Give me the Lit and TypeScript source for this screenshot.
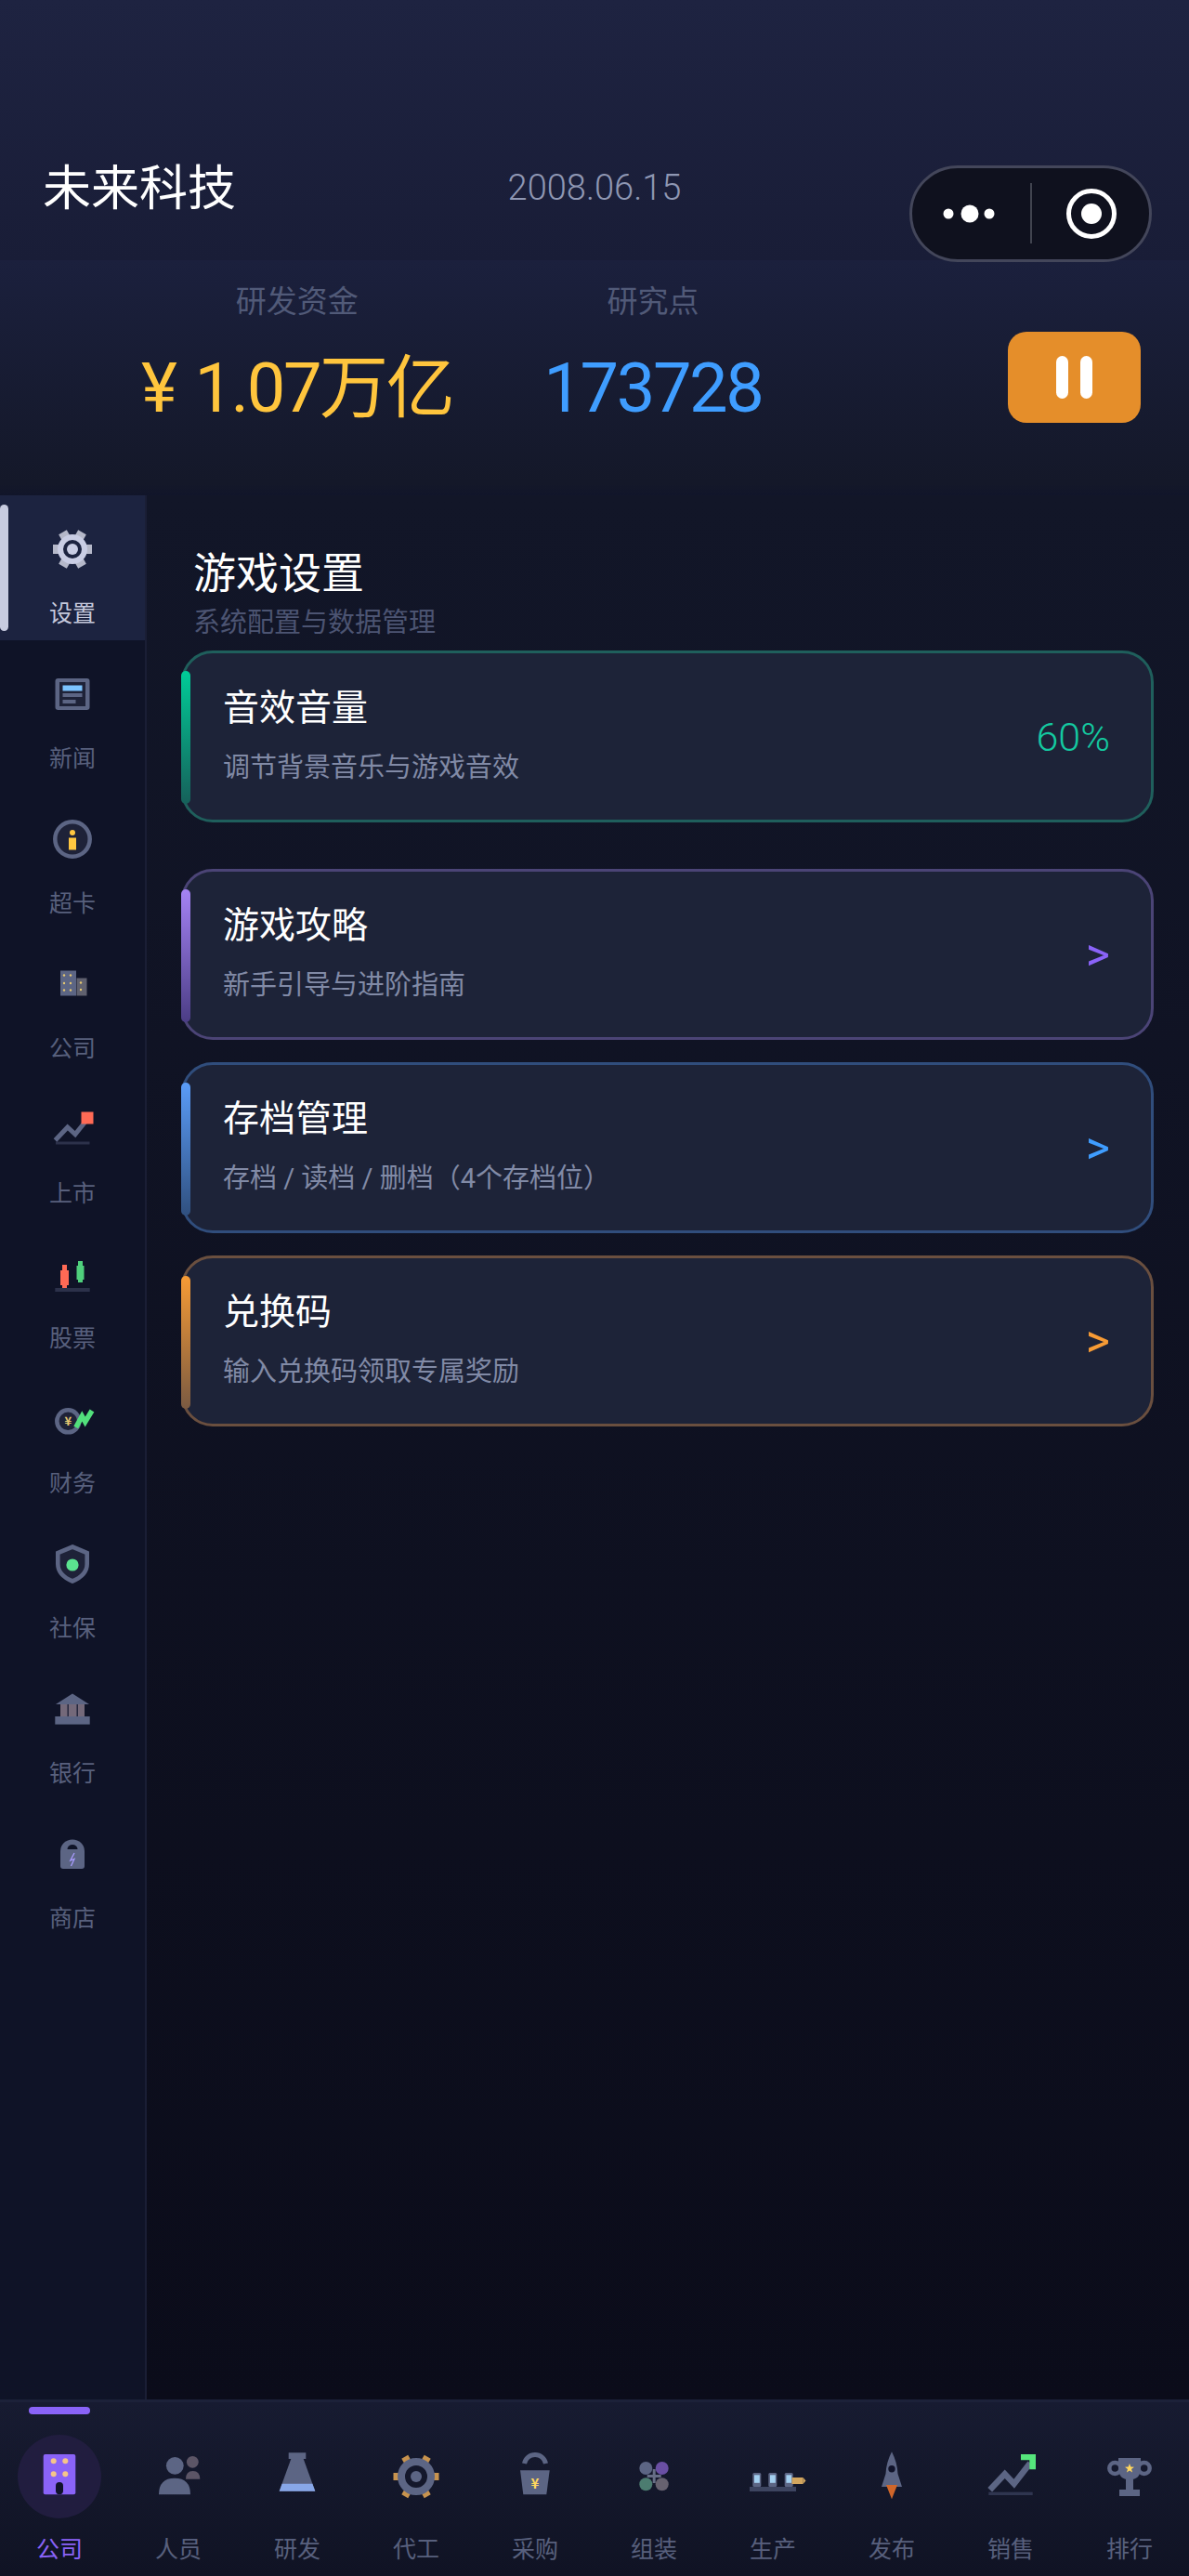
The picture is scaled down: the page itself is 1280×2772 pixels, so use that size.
import { LitElement, css, html, svg } from "lit"
import { customElement } from "lit/decorators.js"

const G = "#5c6584" // grey-blue used by most icons
const D = "#1e2238" // dark icon fill

const side = {
  gear: html`<svg viewBox="0 0 48 48"><g fill="#b5b8c9">${[0, 60, 120, 180, 240, 300].map(a => svg`<rect x="38" y="19" width="7" height="10" transform="rotate(${a} 24 24)"></rect>`)}</g><circle cx="24" cy="24" r="13" fill="none" stroke="#c9cde4" stroke-width="6"></circle><circle cx="24" cy="24" r="6" fill="#c9cde4"></circle></svg>`,
  news: html`<svg viewBox="0 0 48 48"><rect x="5.5" y="7" width="37" height="34" rx="3" fill="${G}"></rect><rect x="10" y="11" width="28" height="26" fill="${D}"></rect><rect x="13.5" y="14.5" width="21" height="6" fill="#7cc4ff"></rect><rect x="13.5" y="23" width="21" height="4" fill="${G}"></rect><rect x="13.5" y="30" width="14" height="4" fill="${G}"></rect></svg>`,
  card: html`<svg viewBox="0 0 48 48"><circle cx="24" cy="24" r="18.7" fill="${D}" stroke="${G}" stroke-width="4.5"></circle><circle cx="24" cy="17" r="3" fill="#ffc740"></circle><rect x="20" y="22.5" width="8" height="13" fill="#ffc740"></rect></svg>`,
  company: html`<svg viewBox="0 0 48 48"><rect x="11" y="9.5" width="17" height="27" fill="${G}"></rect><rect x="28.5" y="17.5" width="11" height="19" fill="#60616f"></rect><g fill="#e6c870">${[15, 22].map(x => [14.5, 23, 30.5].map(y => svg`<circle cx="${x}" cy="${y}" r="1.2"></circle>`))}<circle cx="33" cy="22.5" r="1.2"></circle><circle cx="33" cy="30" r="1.2"></circle></g></svg>`,
  listed: html`<svg viewBox="0 0 48 48"><rect x="6" y="37.5" width="36.5" height="3" fill="#2c314a"></rect><polyline points="5.5,36 18.7,22 27,29.5 39.5,14" fill="none" stroke="${G}" stroke-width="5"></polyline><rect x="33.5" y="5.5" width="13" height="13" fill="#ff6a55"></rect></svg>`,
  stock: html`<svg viewBox="0 0 48 48"><rect x="5.3" y="39" width="37.4" height="4" fill="#2c314a"></rect><rect x="13" y="14" width="5" height="25" fill="#ff6a55"></rect><rect x="11" y="20" width="9" height="16" fill="#ff6a55"></rect><rect x="30" y="10" width="5" height="23" fill="#4fd07c"></rect><rect x="28.5" y="15" width="8" height="15" fill="#4fd07c"></rect></svg>`,
  finance: html`<svg viewBox="0 0 48 48"><circle cx="19.3" cy="26.3" r="12" fill="${D}" stroke="${G}" stroke-width="4.5"></circle><text x="19.3" y="31" text-anchor="middle" font-size="13" font-weight="700" fill="#e6c870">¥</text><polyline points="27.7,33 34.3,21 37.7,27 45,15" fill="none" stroke="#52e07c" stroke-width="5.5"></polyline></svg>`,
  shield: html`<svg viewBox="0 0 48 48"><path d="M24 5.5 L39.7 12 V24 Q39.7 36 24 42.5 Q8.3 36 8.3 24 V12 Z" fill="${D}" stroke="${G}" stroke-width="4.6"></path><circle cx="24" cy="25" r="6.6" fill="#5be38f"></circle></svg>`,
  bank: html`<svg viewBox="0 0 48 48"><polygon points="24,7.5 42,19 6,19" fill="${G}"></polygon><rect x="11" y="19" width="26" height="13" fill="#74697a"></rect><rect x="18.5" y="19" width="1.4" height="13" fill="#1e2238"></rect><rect x="28.5" y="19" width="1.4" height="13" fill="#1e2238"></rect><rect x="5.3" y="32" width="37.4" height="8.6" fill="${G}"></rect></svg>`,
  shop: html`<svg viewBox="0 0 48 48"><path d="M11 21 A13 12.6 0 0 1 37 21 V37 Q37 40 34 40 H14 Q11 40 11 37 Z" fill="${G}"></path><path d="M18.5 19 A5.5 5 0 0 1 29.5 19 Z" fill="#0f1327"></path><polyline points="26,23 21.8,31 26,29.5 22.5,37" fill="none" stroke="#a99cff" stroke-width="1.3"></polyline></svg>`,
}

const nav = {
  company: html`<svg viewBox="0 0 64 64"><rect x="14.7" y="9" width="34.6" height="43.3" rx="2" fill="#8a63f8"></rect><g fill="#f5c58a"><circle cx="25.7" cy="16.3" r="3"></circle><circle cx="38.3" cy="16.3" r="3"></circle><circle cx="25.7" cy="30.3" r="3"></circle><circle cx="38.3" cy="30.3" r="3"></circle></g><rect x="28" y="39" width="8" height="13.3" rx="4" fill="#10132a"></rect></svg>`,
  staff: html`<svg viewBox="0 0 64 64"><circle cx="47.3" cy="17.3" r="6.4" fill="#5c5566"></circle><path d="M40 35.7 Q40 27 47.7 27 Q55.3 27 55.3 35.7 Z" fill="#5c5566"></path><circle cx="28.3" cy="21.3" r="9.4" fill="${G}"></circle><path d="M11 52.3 Q11 34.7 28 34.7 Q45 34.7 45 52.3 Z" fill="${G}"></path></svg>`,
  lab: html`<svg viewBox="0 0 64 64"><rect x="22.7" y="7.3" width="18.6" height="6.7" fill="${G}"></rect><polygon points="25.3,14 38.7,14 51.3,48.7 12.7,48.7" fill="${G}"></polygon><polygon points="15.6,40.7 48.4,40.7 51.3,48.7 12.7,48.7" fill="#88a7e8"></polygon></svg>`,
  oem: html`<svg viewBox="0 0 64 64"><g fill="#c8934e">${[0, 60, 120, 180, 240, 300].map(a => svg`<rect x="51" y="29" width="5.5" height="8" transform="rotate(${a} 32 33)"></rect>`)}</g><circle cx="32" cy="33" r="16" fill="none" stroke="${G}" stroke-width="8"></circle><circle cx="32" cy="33" r="6" fill="${G}"></circle></svg>`,
  buy: html`<svg viewBox="0 0 64 64"><path d="M20.5 19 A11.7 11.7 0 0 1 43.5 19" fill="none" stroke="${G}" stroke-width="5"></path><polygon points="16,26.3 47.7,26.3 44.3,52.3 19.3,52.3" fill="${G}"></polygon><text x="32" y="46" text-anchor="middle" font-size="15" font-weight="700" fill="#ffd75e">¥</text></svg>`,
  build: html`<svg viewBox="0 0 64 64"><circle cx="23.3" cy="24" r="7" fill="${G}"></circle><circle cx="40.7" cy="24" r="7" fill="#6a4fa3"></circle><circle cx="23.3" cy="41.3" r="7" fill="#4c7c70"></circle><circle cx="40.7" cy="41.3" r="7" fill="#676270"></circle><rect x="24.7" y="31" width="15" height="3" fill="#666d85"></rect><rect x="30.7" y="25" width="3" height="15" fill="#666d85"></rect></svg>`,
  make: html`<svg viewBox="0 0 64 64"><rect x="7" y="44" width="50" height="5" fill="#3d4460"></rect>${[10.3, 27.3, 44.7].map(x => svg`<rect x="${x}" y="29" width="9" height="15" rx="1.5" fill="${G}"></rect><rect x="${x + 1.7}" y="31.3" width="5.8" height="8.5" fill="#a3cfef"></rect>`)}<rect x="52.5" y="34" width="12" height="7" fill="#d2a55e"></rect><polygon points="64.5,34 67.5,37.5 64.5,41" fill="#d2a55e"></polygon></svg>`,
  launch: html`<svg viewBox="0 0 64 64"><path d="M32 6.3 Q38 18 38.5 30 L43 44 H21 L25.5 30 Q26 18 32 6.3 Z" fill="${G}"></path><circle cx="32" cy="24.7" r="3.7" fill="#10132a"></circle><polygon points="26,42 38,42 32,57.3" fill="#d0662a"></polygon></svg>`,
  sales: html`<svg viewBox="0 0 64 64"><rect x="8.3" y="49.7" width="47.4" height="3.3" fill="#2f3550"></rect><polyline points="9.7,47.3 25.7,30.3 35.7,40.7 53,18.5" fill="none" stroke="${G}" stroke-width="6.5"></polyline><polygon points="43,9 59,9 59,25.3 52.3,25.3 52.3,15.3 43,15.3" fill="#55e67c"></polygon></svg>`,
  rank: html`<svg viewBox="0 0 64 64"><circle cx="16.3" cy="24" r="6" fill="none" stroke="${G}" stroke-width="4.5"></circle><circle cx="47.7" cy="24" r="6" fill="none" stroke="${G}" stroke-width="4.5"></circle><path d="M20 13 H44 V24 Q44 36 32 36.5 Q20 36 20 24 Z" fill="${G}"></path><rect x="28" y="36" width="8" height="11" fill="${G}"></rect><rect x="21" y="47" width="22" height="7" fill="${G}"></rect><polygon points="32,19 33.3,22.6 37,22.7 34,25 35.1,28.6 32,26.5 28.9,28.6 30,25 27,22.7 30.7,22.6" fill="#ffd75e"></polygon></svg>`,
}

const sideItems = [
  ["设置", side.gear],
  ["新闻", side.news],
  ["超卡", side.card],
  ["公司", side.company],
  ["上市", side.listed],
  ["股票", side.stock],
  ["财务", side.finance],
  ["社保", side.shield],
  ["银行", side.bank],
  ["商店", side.shop],
] as const

const navItems = [
  ["公司", nav.company],
  ["人员", nav.staff],
  ["研发", nav.lab],
  ["代工", nav.oem],
  ["采购", nav.buy],
  ["组装", nav.build],
  ["生产", nav.make],
  ["发布", nav.launch],
  ["销售", nav.sales],
  ["排行", nav.rank],
] as const

const cards = [
  { tone: "green", title: "音效音量", desc: "调节背景音乐与游戏音效", end: "60%" },
  { tone: "purple", title: "游戏攻略", desc: "新手引导与进阶指南", end: ">" },
  { tone: "blue", title: "存档管理", desc: "存档 / 读档 / 删档（4个存档位）", end: ">" },
  { tone: "orange", title: "兑换码", desc: "输入兑换码领取专属奖励", end: ">" },
]

@customElement("app-root")
export class AppRoot extends LitElement {
  static styles = css`
    :host {
      display: flex;
      flex-direction: column;
      width: 1280px;
      height: 2772px;
      overflow: hidden;
      background: #0f1327;
      font-family: Roboto, "Noto Sans CJK SC", "Noto Sans", sans-serif;
    }
    svg {
      display: block;
      overflow: visible;
    }
    svg text {
      font-family: "Noto Sans CJK SC", sans-serif;
    }

    .top {
      position: relative;
      flex: none;
      height: 280px;
      box-sizing: border-box;
      background: linear-gradient(180deg, #1e2341, #191d37);
    }
    .company {
      position: absolute;
      left: 46px;
      top: 171px;
      font-size: 52px;
      line-height: 66px;
      color: #fff;
    }
    .date {
      padding-top: 178px;
      text-align: center;
      font-size: 38px;
      font-weight: 300;
      line-height: 48px;
      color: #8f97b3;
    }
    .capsule {
      position: absolute;
      left: 979px;
      top: 178px;
      z-index: 2;
      display: flex;
      align-items: center;
      box-sizing: border-box;
      width: 261px;
      height: 104px;
      border: 3px solid #43465a;
      border-radius: 52px;
      background: #0f111e;
    }
    .capsule svg {
      width: 255px;
      height: 98px;
    }

    .stats {
      flex: none;
      display: flex;
      align-items: flex-start;
      height: 253px;
      box-sizing: border-box;
      padding: 0 52px 0 152px;
      gap: 98px;
      background: linear-gradient(180deg, #1b203d, #141829 95%, #11152a);
    }
    .stat {
      display: flex;
      flex-direction: column;
      align-items: center;
      padding-top: 22px;
    }
    .stat-label {
      font-size: 33px;
      line-height: 46px;
      color: #515a78;
    }
    .stat-value {
      margin-top: 25px;
      font-size: 74px;
      font-weight: 400;
      line-height: 90px;
      letter-spacing: -2.4px;
      word-spacing: 5px;
      white-space: nowrap;
    }
    .gold {
      color: #ffc53d;
    }
    .sky {
      color: #3f9dff;
    }
    .pause {
      display: flex;
      justify-content: center;
      gap: 13px;
      margin: 77px 0 0 auto;
      width: 143px;
      height: 98px;
      box-sizing: border-box;
      padding-top: 26px;
      border-radius: 20px;
      background: #e58e2a;
    }
    .pause i {
      width: 13px;
      height: 46px;
      border-radius: 6.5px;
      background: #fff;
    }

    .body {
      flex: 1;
      display: flex;
      min-height: 0;
    }
    .side {
      flex: none;
      width: 156px;
      border-right: 2px solid #1a1e35;
      background: #0f1327;
    }
    .side-item {
      position: relative;
      display: flex;
      flex-direction: column;
      align-items: center;
      box-sizing: border-box;
      height: 156px;
      padding-top: 34px;
    }
    .side-item svg {
      width: 48px;
      height: 48px;
    }
    .side-item span {
      margin-top: 31px;
      font-size: 25px;
      line-height: 30px;
      color: #58607d;
    }
    .side-item.on {
      background: #1c2340;
    }
    .side-item.on span {
      color: #c5c9dc;
    }
    .side-item.on::before {
      content: "";
      position: absolute;
      left: 0;
      top: 10px;
      width: 9px;
      height: 136px;
      border-radius: 4.5px;
      background: #c8cce0;
    }

    .main {
      flex: 1;
      box-sizing: border-box;
      padding: 54px 38px 0 37px;
      background: linear-gradient(180deg, #121628, #0b0c1a);
    }
    .main h1 {
      margin: 0 0 0 13px;
      font-size: 46px;
      font-weight: 400;
      line-height: 60px;
      color: #fff;
    }
    .main h2 {
      margin: 3px 0 10px 13px;
      font-size: 29px;
      font-weight: 400;
      line-height: 40px;
      color: #4c5472;
    }
    .list {
      display: flex;
      flex-direction: column;
      gap: 24px;
    }
    .row {
      position: relative;
      display: flex;
      align-items: center;
      justify-content: space-between;
      box-sizing: border-box;
      height: 184px;
      padding: 0 44px 3px 42px;
      border: 3px solid var(--edge);
      border-radius: 34px;
      background: #1d2338;
    }
    .row:first-child {
      height: 185px;
      margin-bottom: 26px;
    }
    .row::before {
      content: "";
      position: absolute;
      left: -3px;
      top: 19px;
      width: 10px;
      height: 143px;
      border-radius: 5px;
      background: linear-gradient(180deg, var(--tone), var(--tail));
    }
    .green {
      --tone: #00cc98;
      --tail: #16605a;
      --edge: #1f5f5c;
    }
    .purple {
      --tone: #a583f5;
      --tail: #4b3d85;
      --edge: #4b4476;
    }
    .blue {
      --tone: #5a9cf8;
      --tail: #30507f;
      --edge: #304d7c;
    }
    .orange {
      --tone: #f79b35;
      --tail: #7a5a42;
      --edge: #6a4f3f;
    }
    .row-title {
      font-size: 39px;
      line-height: 50px;
      color: #fff;
    }
    .row-desc {
      margin-top: 19px;
      font-size: 29px;
      line-height: 40px;
      color: #818aa6;
    }
    .row-end {
      margin-bottom: -3px;
      font-size: 43px;
      font-weight: 300;
      line-height: 50px;
    }
    .green .row-end {
      color: #14c9a0;
    }
    .purple .row-end {
      color: #8a63f8;
    }
    .blue .row-end {
      color: #3f9dff;
    }
    .orange .row-end {
      color: #f79b35;
    }
    .row-end.arrow {
      font-size: 50px;
      font-weight: 400;
    }

    .nav {
      position: relative;
      flex: none;
      display: grid;
      grid-template-columns: repeat(10, 128px);
      height: 190px;
      box-sizing: border-box;
      border-top: 3px solid #1c2139;
      background: linear-gradient(180deg, #171b31, #101324);
    }
    .nav-item {
      position: relative;
      display: flex;
      flex-direction: column;
      align-items: center;
      padding-top: 47px;
    }
    .nav-item svg {
      position: relative;
      width: 64px;
      height: 64px;
    }
    .nav-item span {
      position: relative;
      margin-top: 33px;
      font-size: 25px;
      line-height: 30px;
      color: #58607d;
    }
    .nav-item.on span {
      color: #8a63f8;
    }
    .nav-item.on::before {
      content: "";
      position: absolute;
      left: 31px;
      top: 5px;
      width: 66px;
      height: 8px;
      border-radius: 4px;
      background: #8a63f8;
    }
    .nav-item.on::after {
      content: "";
      position: absolute;
      left: 19px;
      top: 35px;
      width: 90px;
      height: 90px;
      border-radius: 50%;
      background: #211d3f;
    }
    .nav-item.on svg,
    .nav-item.on span {
      z-index: 1;
    }
  `

  render() {
    return html`
      <header class="top">
        <div class="company">未来科技</div>
        <div class="date">2008.06.15</div>
        <div class="capsule">
          <svg viewBox="0 0 255 98">
            <circle cx="39" cy="49" r="5.5" fill="#fff"></circle>
            <circle cx="62" cy="49" r="9.5" fill="#fff"></circle>
            <circle cx="83" cy="49" r="5.5" fill="#fff"></circle>
            <rect x="127" y="16" width="2" height="65" fill="#41444f"></rect>
            <circle cx="193" cy="49" r="24.5" fill="none" stroke="#fff" stroke-width="5"></circle>
            <circle cx="193" cy="49" r="11" fill="#fff"></circle>
          </svg>
        </div>
      </header>

      <section class="stats">
        <div class="stat">
          <div class="stat-label">研发资金</div>
          <div class="stat-value gold">¥ 1.07万亿</div>
        </div>
        <div class="stat">
          <div class="stat-label">研究点</div>
          <div class="stat-value sky">173728</div>
        </div>
        <div class="pause"><i></i><i></i></div>
      </section>

      <div class="body">
        <aside class="side">
          ${sideItems.map(
            ([label, icon], i) => html`
              <div class="side-item ${i === 0 ? "on" : ""}">${icon}<span>${label}</span></div>
            `,
          )}
        </aside>
        <main class="main">
          <h1>游戏设置</h1>
          <h2>系统配置与数据管理</h2>
          <div class="list">
            ${cards.map(
              c => html`
                <div class="row ${c.tone}">
                  <div>
                    <div class="row-title">${c.title}</div>
                    <div class="row-desc">${c.desc}</div>
                  </div>
                  <div class="row-end ${c.end === ">" ? "arrow" : ""}">${c.end}</div>
                </div>
              `,
            )}
          </div>
        </main>
      </div>

      <nav class="nav">
        ${navItems.map(
          ([label, icon], i) => html`
            <div class="nav-item ${i === 0 ? "on" : ""}">${icon}<span>${label}</span></div>
          `,
        )}
      </nav>
    `
  }
}

declare global {
  interface HTMLElementTagNameMap {
    "app-root": AppRoot
  }
}
